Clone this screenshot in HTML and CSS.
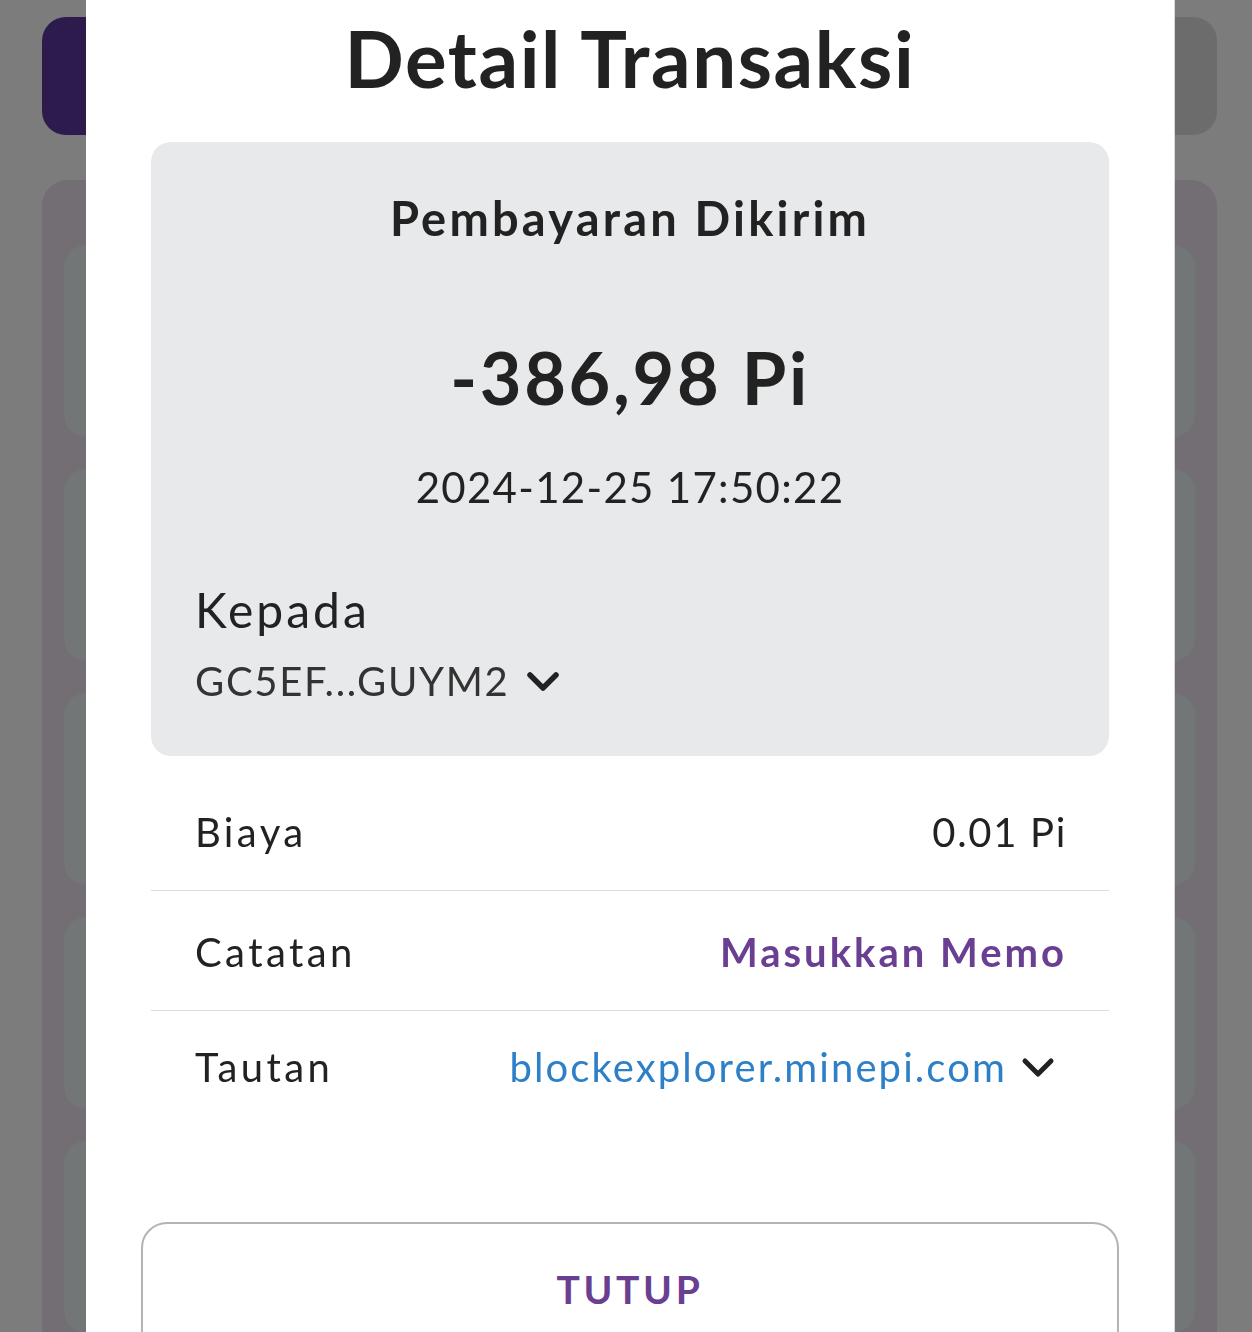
FILE: index.html
```html
<!DOCTYPE html>
<html lang="id">
<head>
    <meta charset="UTF-8">
    <meta name="viewport" content="width=device-width, initial-scale=1.0">
    <title>Detail Transaksi</title>
    <link rel="stylesheet" href="styles.css">
</head>
<body>
    <!-- page behind the dialog -->
    <div class="page">
        <div class="top-bar">
            <div class="top-bar-left"></div>
            <div class="top-bar-right"></div>
        </div>
        <div class="history">
            <div class="history-card"></div>
            <div class="history-card"></div>
            <div class="history-card"></div>
            <div class="history-card"></div>
            <div class="history-card"></div>
        </div>
    </div>

    <div class="overlay">
        <div class="modal">
            <h1 class="modal-title">Detail Transaksi</h1>

            <div class="summary">
                <div class="summary-type">Pembayaran Dikirim</div>
                <div class="summary-amount">-386,98 Pi</div>
                <div class="summary-date">2024-12-25 17:50:22</div>
                <div class="summary-label">Kepada</div>
                <div class="summary-address">
                    <span>GC5EF...GUYM2</span>
                    <svg class="chevron" width="34" height="24" viewBox="0 0 34 24">
                        <polyline points="4,6 17,19 30,6" fill="none" stroke="#222" stroke-width="5.5" stroke-linecap="round" stroke-linejoin="round"/>
                    </svg>
                </div>
            </div>

            <div class="detail-row first">
                <span class="detail-label">Biaya</span>
                <span class="detail-value">0.01 Pi</span>
            </div>
            <div class="detail-row">
                <span class="detail-label">Catatan</span>
                <span class="detail-value memo">Masukkan Memo</span>
            </div>
            <div class="detail-row last">
                <span class="detail-label">Tautan</span>
                <span class="detail-value link">
                    <span>blockexplorer.minepi.com</span>
                    <svg class="chevron" width="34" height="24" viewBox="0 0 34 24">
                        <polyline points="4,6 17,19 30,6" fill="none" stroke="#222" stroke-width="5" stroke-linecap="round" stroke-linejoin="round"/>
                    </svg>
                </span>
            </div>

            <button class="close-btn" type="button">TUTUP</button>
        </div>
    </div>
</body>
</html>
```

FILE: styles.css
```css
body {
    margin: 0;
    padding: 0;
    background-color: #7c7c7c;
    font-family: Lato, "Noto Sans", sans-serif;
    overflow: hidden;
}
.page {
    padding: 17px 35px 0 42px;
    height: 1315px;
}
.top-bar {
    display: flex;
    height: 118px;
    border-radius: 24px;
    overflow: hidden;
}
.top-bar-left {
    flex: 1;
    background-color: #2e1b4e;
}
.top-bar-right {
    flex: 1;
    background-color: #6c6c6c;
}
.history {
    margin-top: 45px;
    padding: 65px 22px 0 22px;
    background-color: #726e73;
    border-radius: 26px;
    display: flex;
    flex-direction: column;
    gap: 32px;
    height: 1200px;
}
.history-card {
    height: 192px;
    flex-shrink: 0;
    background-color: #737677;
    border-radius: 22px;
}
.overlay {
    position: fixed;
    top: 0;
    left: 0;
    right: 0;
    bottom: 0;
}
.modal {
    margin-left: 86px;
    width: 1088px;
    height: 100%;
    background: #fff;
    padding: 12px 55px 0 55px;
    box-sizing: border-box;
    display: flex;
    flex-direction: column;
    box-shadow: 1px 0 0 #d8d8d8;
}
.modal-title {
    margin: 0;
    text-align: center;
    font-size: 78px;
    line-height: 1.2;
    font-weight: 700;
    letter-spacing: 1.6px;
    color: #222;
}
.summary {
    margin: 36px 10px 0 10px;
    padding: 48px 44px 51px 44px;
    background-color: #e8e9eb;
    border-radius: 20px;
    color: #222;
}
.summary-type {
    text-align: center;
    font-size: 47px;
    line-height: 1.2;
    font-weight: 700;
    letter-spacing: 3.2px;
}
.summary-amount {
    margin-top: 88px;
    text-align: center;
    font-size: 72px;
    line-height: 1.2;
    font-weight: 700;
    letter-spacing: 2.7px;
}
.summary-date {
    margin-top: 42px;
    text-align: center;
    font-size: 42px;
    line-height: 1.2;
    letter-spacing: 1.3px;
}
.summary-label {
    margin-top: 68px;
    font-size: 48px;
    line-height: 1.2;
    letter-spacing: 3px;
}
.summary-address {
    margin-top: 19px;
    font-size: 40px;
    line-height: 1.2;
    letter-spacing: 1.7px;
    color: #333;
    display: flex;
    align-items: center;
    gap: 16px;
}
.detail-row {
    margin: 0 10px;
    padding: 37px 44px 34px 44px;
    display: flex;
    justify-content: space-between;
    align-items: center;
    font-size: 40px;
    line-height: 1.2;
    color: #222;
    border-bottom: 1px solid #dedede;
}
.detail-row.first {
    margin-top: 15px;
}
.detail-row.last {
    border-bottom: none;
    padding-top: 32px;
    padding-right: 56px;
}
.detail-label {
    letter-spacing: 3.4px;
}
.detail-value {
    letter-spacing: 1.7px;
    margin-right: -2px;
}
.memo {
    color: #6a3f92;
    font-weight: 700;
    letter-spacing: 3px;
}
.link {
    display: flex;
    align-items: center;
    gap: 14px;
    color: #2d80c8;
    letter-spacing: 2.1px;
}
.close-btn {
    margin-top: 97px;
    height: 140px;
    flex-shrink: 0;
    padding: 0 0 6px 0;
    background: #fff;
    border: 2px solid #b4b4b4;
    border-radius: 26px;
    font-family: Lato, "Noto Sans", sans-serif;
    font-size: 39px;
    font-weight: 700;
    letter-spacing: 3.6px;
    color: #6a3f92;
    cursor: pointer;
}
```
